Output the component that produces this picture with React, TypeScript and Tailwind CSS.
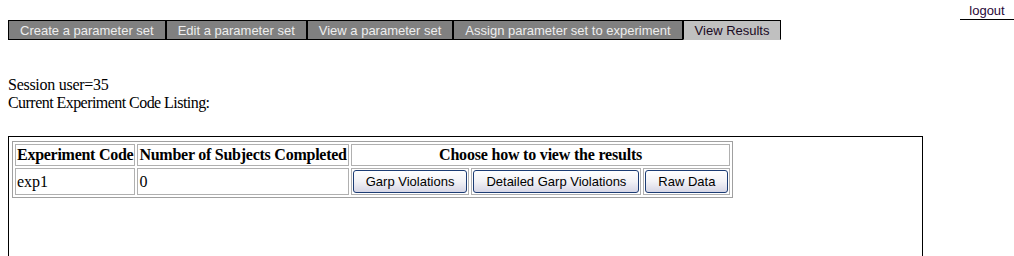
import React from "react";

const tabs = [
  "Create a parameter set",
  "Edit a parameter set",
  "View a parameter set",
  "Assign parameter set to experiment",
];

function Btn({ children }: { children: React.ReactNode }) {
  return (
    <button
      className="h-[23px] px-[12px] rounded-[3px] border border-[#1c3c74] bg-gradient-to-b from-[#ffffff] via-[#f2f2f6] to-[#d6d6e6] text-[13px] text-black leading-[15px]"
      style={{ fontFamily: "Arial, 'Liberation Sans', sans-serif" }}
    >
      {children}
    </button>
  );
}

export default function App() {
  const serif = { fontFamily: "'Times New Roman', 'Liberation Serif', serif" };
  const sans = { fontFamily: "Arial, 'Liberation Sans', sans-serif" };
  return (
    <div className="w-[1014px] h-[256px] overflow-hidden bg-white text-black">
      <div className="flex justify-end h-[20px]">
        <div
          className="w-[54px] h-[20px] border-b border-black text-center text-[13px] leading-[15px] pt-[3px] text-[#2a0a38]"
          style={sans}
        >
          logout
        </div>
      </div>
      <div className="flex ml-[8px] h-[20px]" style={sans}>
        {tabs.map((t) => (
          <div
            key={t}
            className="border border-black bg-[#808080] text-[#eeeeee] text-[13px] leading-[15px] pt-[2px] px-[11px] whitespace-nowrap"
          >
            {t}
          </div>
        ))}
        <div className="border border-black border-b-[#c0c0c0] bg-[#c0c0c0] text-[#1a0a24] text-[13px] leading-[15px] pt-[2px] px-[11px] whitespace-nowrap">
          View Results
        </div>
      </div>
      <div className="px-[8px] pt-[36px] text-[16px] leading-[18px]" style={serif}>
        <div className="tracking-[-0.27px]">Session user=35</div>
        <div className="tracking-[-0.55px]">Current Experiment Code Listing:</div>
        <div className="mt-[24px] w-[915px] h-[200px] border border-black pt-[4px] pl-[3px]">
          <table className="border-separate border-spacing-[2px] border border-[#a0a0a0] text-[16px]">
            <tbody>
              <tr>
                <th className="border border-[#b0b0b0] p-[1px] text-left font-bold whitespace-nowrap h-[22px] tracking-[-0.27px]">
                  Experiment Code
                </th>
                <th className="border border-[#b0b0b0] p-[1px] text-left font-bold whitespace-nowrap tracking-[-0.25px]">
                  Number of Subjects Completed
                </th>
                <th colSpan={3} className="border border-[#b0b0b0] p-[1px] text-center font-bold whitespace-nowrap tracking-[-0.2px]">
                  Choose how to view the results
                </th>
              </tr>
              <tr>
                <td className="border border-[#b0b0b0] p-[1px]">exp1</td>
                <td className="border border-[#b0b0b0] p-[1px]">0</td>
                <td className="border border-[#b0b0b0] p-[1px]">
                  <Btn>Garp Violations</Btn>
                </td>
                <td className="border border-[#b0b0b0] p-[1px]">
                  <Btn>Detailed Garp Violations</Btn>
                </td>
                <td className="border border-[#b0b0b0] p-[1px]">
                  <Btn>Raw Data</Btn>
                </td>
              </tr>
            </tbody>
          </table>
        </div>
      </div>
    </div>
  );
}
